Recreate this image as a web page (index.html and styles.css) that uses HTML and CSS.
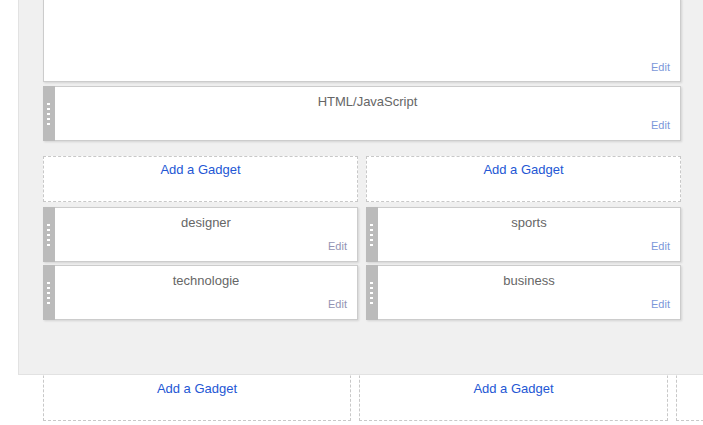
FILE: index.html
```html
<!DOCTYPE html>
<html>
<head>
<meta charset="utf-8">
<link rel="stylesheet" href="styles.css">
</head>
<body>
<div class="panel">
  <div class="card card-top">
    <div class="card-body">
      <div class="title"></div>
      <a class="edit">Edit</a>
    </div>
  </div>
  <div class="card card-full">
    <div class="handle"><i></i><i></i><i></i><i></i><i></i></div>
    <div class="card-body">
      <div class="title">HTML/JavaScript</div>
      <a class="edit">Edit</a>
    </div>
  </div>
  <div class="columns">
    <div class="col">
      <div class="add">Add a Gadget</div>
      <div class="card">
        <div class="handle"><i></i><i></i><i></i><i></i><i></i></div>
        <div class="card-body">
          <div class="title">designer</div>
          <a class="edit edit-muted">Edit</a>
        </div>
      </div>
      <div class="card">
        <div class="handle"><i></i><i></i><i></i><i></i><i></i></div>
        <div class="card-body">
          <div class="title">technologie</div>
          <a class="edit edit-muted">Edit</a>
        </div>
      </div>
    </div>
    <div class="col">
      <div class="add">Add a Gadget</div>
      <div class="card">
        <div class="handle"><i></i><i></i><i></i><i></i><i></i></div>
        <div class="card-body">
          <div class="title">sports</div>
          <a class="edit">Edit</a>
        </div>
      </div>
      <div class="card">
        <div class="handle"><i></i><i></i><i></i><i></i><i></i></div>
        <div class="card-body">
          <div class="title">business</div>
          <a class="edit">Edit</a>
        </div>
      </div>
    </div>
  </div>
</div>
<div class="footer-row">
  <div class="add add-bottom">Add a Gadget</div>
  <div class="add add-bottom">Add a Gadget</div>
  <div class="add add-bottom"></div>
</div>
</body>
</html>
```
FILE: styles.css
```css
html, body {
  margin: 0;
  padding: 0;
  background: #ffffff;
  overflow: hidden;
  font-family: "Liberation Sans", Arial, sans-serif;
}

.panel {
  margin: -2px 0 0 18px;
  width: 720px;
  background: #f0f0f0;
  border-left: 1px solid #e2e2e2;
  border-bottom: 1px solid #e2e2e2;
  padding: 0 0 54px 24px;
  box-sizing: content-box;
}

.card {
  display: flex;
  width: 315px;
  height: 55px;
  margin-bottom: 3px;
  box-shadow: 1px 1px 2px rgba(0, 0, 0, 0.12);
  background: #ffffff;
}

.col .card:last-child {
  margin-bottom: 0;
}

.card-top {
  width: 638px;
  height: 84px;
  margin-bottom: 4px;
}

.card-full {
  width: 638px;
  margin-bottom: 15px;
}

.handle {
  width: 12px;
  flex: none;
  background: #bbbbbb;
  display: flex;
  flex-direction: column;
  align-items: center;
  justify-content: center;
  gap: 3px;
}

.handle i {
  display: block;
  width: 3px;
  height: 2px;
  margin-left: -1px;
  background: #ffffff;
}

.card-body {
  flex: 1;
  display: flex;
  flex-direction: column;
  border: 1px solid #cccccc;
  padding: 7px 10px 8px;
}

.card-top .card-body {
  border-top: none;
  padding-bottom: 7px;
}

.card .handle + .card-body {
  border-left: none;
}

.title {
  font-size: 13px;
  line-height: 16px;
  height: 16px;
  color: #666666;
  text-align: center;
}

.edit {
  margin-top: auto;
  align-self: flex-end;
  font-size: 11px;
  line-height: 14px;
  color: #7b97d9;
}

.edit-muted {
  color: #9393b3;
}

.columns {
  display: flex;
  gap: 8px;
  width: 638px;
}

.col {
  display: flex;
  flex-direction: column;
}

.add {
  box-sizing: border-box;
  width: 315px;
  height: 46px;
  margin-bottom: 5px;
  border: 1px dashed #c8c8c8;
  padding-top: 5px;
  font-size: 13px;
  line-height: 16px;
  color: #2457d4;
  text-align: center;
  background: #ffffff;
}

.footer-row {
  display: grid;
  grid-template-columns: 308px 309px 309px;
  gap: 8px;
  margin-left: 43px;
}

.add-bottom {
  width: auto;
  margin: 0;
  padding-top: 5px;
  border-top-color: transparent;
}
```
